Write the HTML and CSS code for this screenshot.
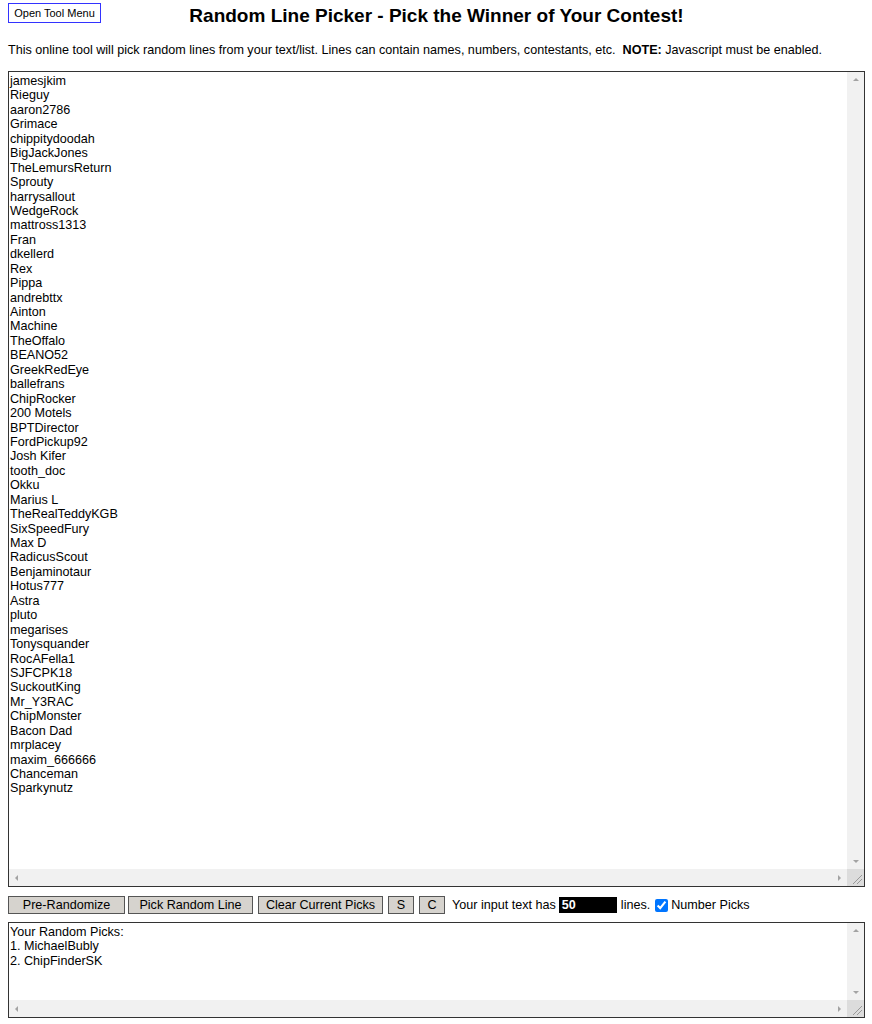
FILE: index.html
```html
<!DOCTYPE html>
<html lang="en">
<head>
    <meta charset="UTF-8">
    <meta name="viewport" content="width=device-width, initial-scale=1.0">
    <title>Random Line Picker</title>
    <link rel="stylesheet" href="styles.css">
</head>
<body>
    <div id="topo">
        <div><button class="menuBtn">Open Tool Menu</button></div>
        <h1>Random Line Picker - Pick the Winner of Your Contest!</h1>
        <div></div>
    </div>

    <p class="desc">This online tool will pick random lines from your text/list. Lines can contain names, numbers, contestants, etc. &nbsp;<b>NOTE:</b> Javascript must be enabled.</p>

    <div class="caixa grande">
        <textarea id="entrada" spellcheck="false">jamesjkim
Rieguy
aaron2786
Grimace
chippitydoodah
BigJackJones
TheLemursReturn
Sprouty
harrysallout
WedgeRock
mattross1313
Fran
dkellerd
Rex
Pippa
andrebttx
Ainton
Machine
TheOffalo
BEANO52
GreekRedEye
ballefrans
ChipRocker
200 Motels
BPTDirector
FordPickup92
Josh Kifer
tooth_doc
Okku
Marius L
TheRealTeddyKGB
SixSpeedFury
Max D
RadicusScout
Benjaminotaur
Hotus777
Astra
pluto
megarises
Tonysquander
RocAFella1
SJFCPK18
SuckoutKing
Mr_Y3RAC
ChipMonster
Bacon Dad
mrplacey
maxim_666666
Chanceman
Sparkynutz</textarea>
        <div class="barraV"><span class="seta cima"></span><span class="seta baixo"></span></div>
        <div class="barraH"><span class="seta esq"></span><span class="seta dir"></span></div>
        <div class="canto">
            <svg width="17" height="17" viewBox="0 0 17 17"><path d="M15 6 L6 15 M15 10 L10 15" stroke="#999" stroke-width="1" fill="none"/></svg>
        </div>
    </div>

    <div id="controles">
        <button class="botao b1">Pre-Randomize</button>
        <button class="botao b2">Pick Random Line</button>
        <button class="botao b2">Clear Current Picks</button>
        <button class="botao b3">S</button>
        <button class="botao b3">C</button>
        <span class="info">Your input text has</span>
        <span class="contador">50</span>
        <span>lines.</span>
        <label class="numerar"><input type="checkbox" checked> Number Picks</label>
    </div>

    <div class="caixa pequena">
        <textarea id="saida" spellcheck="false">Your Random Picks:
1. MichaelBubly
2. ChipFinderSK</textarea>
        <div class="barraV"><span class="seta cima"></span><span class="seta baixo"></span></div>
        <div class="barraH"><span class="seta esq"></span><span class="seta dir"></span></div>
        <div class="canto">
            <svg width="17" height="17" viewBox="0 0 17 17"><path d="M15 6 L6 15 M15 10 L10 15" stroke="#999" stroke-width="1" fill="none"/></svg>
        </div>
    </div>
</body>
</html>
```

FILE: styles.css
```css
body{
    margin: 3px 7px 0 8px;
    font-family: "Liberation Sans", Arial, sans-serif;
    font-size: 12.6px;
    color: #000;
    background: #fff;
}

#topo{
    display: grid;
    grid-template-columns: 1fr auto 1fr;
    align-items: start;
    height: 20px;
}

.menuBtn{
    font-family: "Liberation Sans", Arial, sans-serif;
    font-size: 11px;
    background: #fff;
    border: 1px solid #3333ff;
    width: 93px;
    height: 20px;
    padding: 0;
    margin: 0;
    color: #000;
}

h1{
    margin: 2px 0 0 0;
    font-size: 19px;
    line-height: 22px;
    white-space: nowrap;
}

.desc{
    margin: 20px 0 0 0;
    line-height: 15px;
}

.caixa{
    display: grid;
    grid-template-columns: 1fr 17px;
    grid-template-rows: 1fr 17px;
    border: 1px solid #333;
    width: 855px;
}

.grande{
    height: 814px;
    margin-top: 13px;
}

.pequena{
    height: 94px;
    margin-top: 8px;
}

.caixa textarea{
    border: none;
    outline: none;
    resize: none;
    overflow: hidden;
    margin: 0;
    padding: 2px 1px;
    font-family: "Liberation Sans", Arial, sans-serif;
    font-size: 12.6px;
    line-height: 14.43px;
    color: #000;
}

.barraV{
    background: #f1f1f1;
    display: flex;
    flex-direction: column;
    justify-content: space-between;
    align-items: center;
    padding: 6px 0;
}

.barraH{
    background: #f1f1f1;
    display: flex;
    justify-content: space-between;
    align-items: center;
    padding: 0 6px;
}

.canto{
    background: #dcdcdc;
}

.seta{
    width: 0;
    height: 0;
    border: 3.5px solid transparent;
}
.cima{ border-bottom-color: #a3a3a3; border-top-width: 0; }
.baixo{ border-top-color: #a3a3a3; border-bottom-width: 0; }
.esq{ border-right-color: #a3a3a3; border-left-width: 0; }
.dir{ border-left-color: #a3a3a3; border-right-width: 0; }

#controles{
    display: flex;
    align-items: center;
    margin-top: 9px;
    height: 18px;
}

.botao{
    font-family: "Liberation Sans", Arial, sans-serif;
    font-size: 12.6px;
    background: #d6d3ce;
    border: 1px solid #555;
    height: 18px;
    padding: 0;
    margin: 0 4px 0 0;
    color: #000;
}
.b1{ width: 117px; margin-right: 3px; }
.b2{ width: 125px; margin-right: 5px; }
.b3{ width: 26px; margin-right: 5px; }

.info{
    margin-left: 2px;
    margin-right: 3px;
}

.contador{
    display: inline-block;
    width: 55px;
    height: 16px;
    line-height: 16px;
    background: #000;
    color: #fff;
    font-weight: bold;
    padding-left: 3px;
    margin-right: 4px;
}

.numerar{
    display: flex;
    align-items: center;
    margin-left: 5px;
}

.numerar input{
    margin: 0 3px 0 0;
    width: 13px;
    height: 13px;
    accent-color: #0075ff;
}
```
